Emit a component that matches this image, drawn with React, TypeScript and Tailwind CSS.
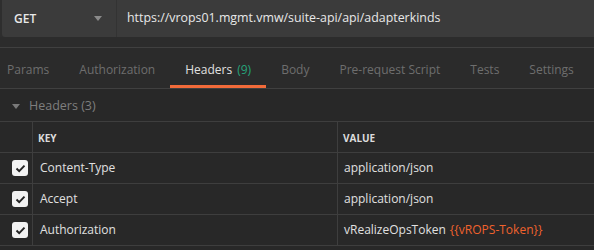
const tabs = [
  { label: "Params" },
  { label: "Authorization" },
  { label: "Headers", count: "(9)", active: true },
  { label: "Body" },
  { label: "Pre-request Script" },
  { label: "Tests" },
  { label: "Settings" },
];

const headers = [
  { key: "Content-Type", value: "application/json" },
  { key: "Accept", value: "application/json" },
  { key: "Authorization", value: "vRealizeOpsToken", variable: "{{vROPS-Token}}" },
];

function Checkbox() {
  return (
    <div className="w-4 h-4 rounded-[3px] bg-[#f2f2f2] flex items-center justify-center">
      <svg width="11" height="9" viewBox="0 0 11 9" fill="none">
        <path d="M1.5 4.5 L4.2 7.2 L9.5 1.6" stroke="#222" strokeWidth="1.9" />
      </svg>
    </div>
  );
}

export default function App() {
  return (
    <div
      className="w-[594px] h-[250px] overflow-hidden bg-[#282828] text-[12px]"
      style={{ fontFamily: '"Open Sans", "Noto Sans", sans-serif' }}
    >
      {/* request bar */}
      <div className="bg-[#2e2e2e] pl-[2px]">
        <div className="flex h-[37px] bg-[#3b3b3b] rounded-bl-[3px]">
          <div className="w-[115px] flex items-center justify-between pl-[12px] pr-[14px] border-r border-[#333]">
            <span className="font-semibold text-[#e8e8e8]">GET</span>
            <span className="w-0 h-0 border-l-[4px] border-r-[4px] border-t-[5px] border-l-transparent border-r-transparent border-t-[#8a8a8a]" />
          </div>
          <div className="flex items-center pl-[10px] text-[12.4px] text-[#e8e8e8]">
            https://vrops01.mgmt.vmw/suite-api/api/adapterkinds
          </div>
        </div>
      </div>
      <div className="h-[11px] bg-[#2c2c2c] border-b border-[#404040]" />

      {/* tabs */}
      <div className="flex h-[41px] bg-[#2b2b2b] border-b border-[#404040] ml-[-8px]">
        {tabs.map((t) => (
          <div
            key={t.label}
            className={`px-[15px] pt-[6px] flex items-center whitespace-nowrap border-b-[3px] ${
              t.active ? "border-[#f26b3a] text-[#e0e0e0]" : "border-transparent text-[#6e6e6e]"
            }`}
          >
            {t.label}
            {t.count && <span className="ml-[5px] text-[#26a37a]">{t.count}</span>}
          </div>
        ))}
      </div>

      {/* headers section */}
      <div className="h-[32px] flex items-center pl-[12px] pt-[2px] text-[#7e7e7e] gap-[9px]">
        <span className="w-0 h-0 border-l-[4px] border-r-[4px] border-t-[5px] border-l-transparent border-r-transparent border-t-[#7a7a7a]" />
        <span className="text-[12.5px]">Headers (3)</span>
      </div>

      <div className="border-t border-[#3e3e3e]">
        <div className="flex h-[31px] border-b border-[#3e3e3e] text-[10px] font-bold text-[#dcdcdc]">
          <div className="w-[33px] border-r border-[#3e3e3e]" />
          <div className="w-[305px] border-r border-[#3e3e3e] flex items-center pl-[5px] pt-[2px]">KEY</div>
          <div className="flex-1 flex items-center pl-[5px] pt-[2px]">VALUE</div>
        </div>
        {headers.map((h) => (
          <div key={h.key} className="flex h-[31px] border-b border-[#3e3e3e] text-[#e0e0e0]">
            <div className="w-[33px] border-r border-[#3e3e3e] flex items-center pl-[12px]">
              <Checkbox />
            </div>
            <div className="w-[305px] border-r border-[#3e3e3e] flex items-center pl-[7px]">{h.key}</div>
            <div className="flex-1 flex items-center pl-[6px]">
              {h.value}
              {h.variable && <span className="ml-[4px] text-[#f0622d]">{h.variable}</span>}
            </div>
          </div>
        ))}
      </div>
    </div>
  );
}
